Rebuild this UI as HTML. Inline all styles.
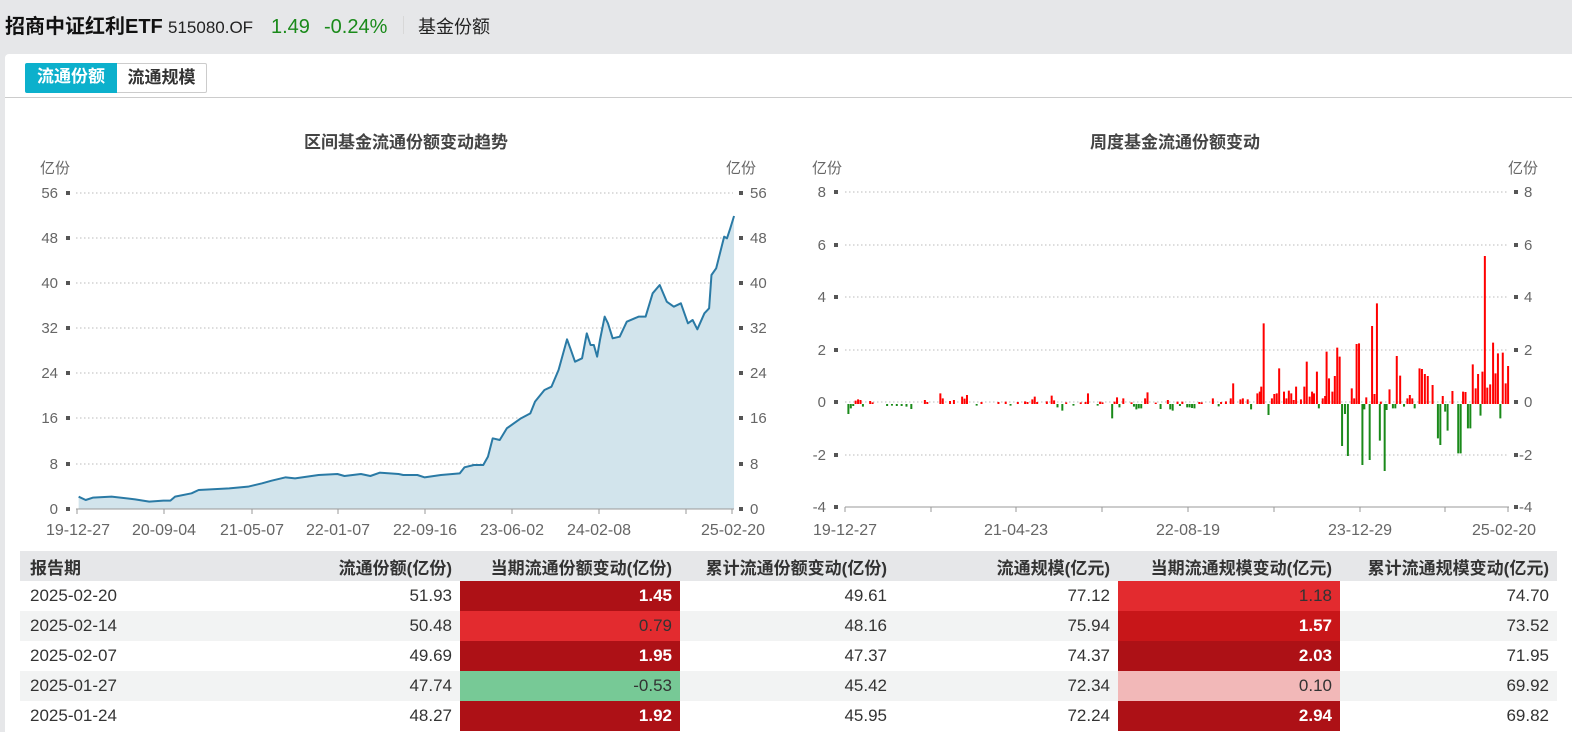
<!DOCTYPE html>
<html><head><meta charset="utf-8">
<style>
*{margin:0;padding:0;box-sizing:border-box}
body{width:1572px;height:732px;overflow:hidden;background:#e6e7e9;font-family:"Liberation Sans","Noto Sans CJK SC",sans-serif;color:#333;position:relative}
.top{position:absolute;left:5px;top:10px;height:30px;display:flex;align-items:baseline;white-space:nowrap}
.top span{display:inline-block}
.panel{position:absolute;left:5px;top:54px;width:1567px;height:678px;background:#fff;border-radius:4px 0 0 0}
.tab{position:absolute;top:63px;height:30px;line-height:28px;font-size:17px;font-weight:bold;text-align:center}
.sep{position:absolute;left:5px;top:97px;width:1567px;height:1px;background:#ccc}
svg{position:absolute;left:0;top:0}
table{position:absolute;left:20px;top:551px;border-collapse:collapse;font-size:17px;width:1537px}
td,th{height:30px;padding:0 8px;text-align:right;white-space:nowrap}
th{background:#e6e7e9;font-weight:bold;color:#333}
td:first-child,th:first-child{text-align:left;padding-left:10px}
tr.a td{background:#f2f3f3}
.dr{background:#ad1116!important;color:#fff;font-weight:bold}
.r{background:#e32b2f!important;color:#333}
.mr{background:#c81619!important;color:#fff;font-weight:bold}
.pk{background:#f2b8b8!important}
.g{background:#77c996!important}
</style></head><body>
<div class="top">
<span style="width:163px;font-size:20px;font-weight:bold;color:#111">招商中证红利ETF</span>
<span style="width:103px;font-size:17px;color:#222">515080.OF</span>
<span style="width:53px;font-size:20px;color:#1a8a1a">1.49</span>
<span style="width:79px;font-size:20px;color:#1a8a1a">-0.24%</span>
<span style="width:1px;height:18px;background:#d8d8d8;align-self:center"></span>
<span style="font-size:18px;color:#222;margin-left:14px">基金份额</span>
</div>
<div class="panel"></div>
<div class="tab" style="left:25px;width:92px;background:#0cb0cc;color:#fff;border-radius:2px 0 0 2px">流通份额</div>
<div class="tab" style="left:117px;width:90px;background:#fff;border:1px solid #ccc;border-left:none;color:#333;border-radius:0 2px 2px 0">流通规模</div>
<div class="sep"></div>

<svg width="1572" height="732" font-family="Liberation Sans, Noto Sans CJK SC, sans-serif">
<text x="406" y="148" font-size="17" font-weight="bold" fill="#444" text-anchor="middle">区间基金流通份额变动趋势</text>
<text x="1175" y="148" font-size="17" font-weight="bold" fill="#444" text-anchor="middle">周度基金流通份额变动</text>
<g font-size="15" fill="#666">
<text x="40" y="173">亿份</text><text x="726" y="173">亿份</text>
<text x="812" y="173">亿份</text><text x="1508" y="173">亿份</text>
</g>
<g stroke="#bbb" stroke-dasharray="1.5,2.5" stroke-width="1">
<line x1="76" x2="733" y1="193" y2="193"/><line x1="76" x2="733" y1="238" y2="238"/>
<line x1="76" x2="733" y1="283" y2="283"/><line x1="76" x2="733" y1="328" y2="328"/>
<line x1="76" x2="733" y1="373" y2="373"/><line x1="76" x2="733" y1="418" y2="418"/>
<line x1="76" x2="733" y1="464" y2="464"/>
</g>
<g font-size="15" fill="#666">
<text x="58" y="198" text-anchor="end">56</text><text x="58" y="243" text-anchor="end">48</text>
<text x="58" y="288" text-anchor="end">40</text><text x="58" y="333" text-anchor="end">32</text>
<text x="58" y="378" text-anchor="end">24</text><text x="58" y="423" text-anchor="end">16</text>
<text x="58" y="469" text-anchor="end">8</text><text x="58" y="514" text-anchor="end">0</text>
<text x="750" y="198">56</text><text x="750" y="243">48</text><text x="750" y="288">40</text>
<text x="750" y="333">32</text><text x="750" y="378">24</text><text x="750" y="423">16</text>
<text x="750" y="469">8</text><text x="750" y="514">0</text>
</g>
<g fill="#555">
<rect x="66" y="191" width="4" height="4"/><rect x="66" y="236" width="4" height="4"/><rect x="66" y="281" width="4" height="4"/><rect x="66" y="326" width="4" height="4"/><rect x="66" y="371" width="4" height="4"/><rect x="66" y="416" width="4" height="4"/><rect x="66" y="462" width="4" height="4"/><rect x="66" y="507" width="4" height="4"/>
<rect x="739" y="191" width="4" height="4"/><rect x="739" y="236" width="4" height="4"/><rect x="739" y="281" width="4" height="4"/><rect x="739" y="326" width="4" height="4"/><rect x="739" y="371" width="4" height="4"/><rect x="739" y="416" width="4" height="4"/><rect x="739" y="462" width="4" height="4"/><rect x="739" y="507" width="4" height="4"/>
</g>
<g transform="translate(41,180) scale(0.4705,0.33333)">
<path d="M80,950 L95,960 110,953 150,950 200,958 230,965 260,962 275,962 285,950 320,940 335,930 400,925 440,920 470,910 490,902 520,892 540,895 590,885 630,882 645,888 680,882 700,888 720,878 760,882 770,885 800,885 815,892 850,885 890,880 900,862 920,855 940,855 950,830 960,775 975,780 990,745 1020,715 1040,700 1050,665 1070,630 1085,620 1100,570 1118,478 1125,505 1135,545 1150,535 1160,460 1168,495 1175,495 1182,530 1188,480 1198,410 1205,430 1215,475 1230,470 1245,425 1270,410 1285,410 1300,340 1315,315 1330,365 1345,380 1360,370 1375,430 1385,420 1395,448 1410,400 1420,385 1425,285 1435,265 1452,170 1458,175 1465,145 1473,108 L1473,988 L80,988 Z" fill="#d2e4ec"/>
<path d="M80,950 L95,960 110,953 150,950 200,958 230,965 260,962 275,962 285,950 320,940 335,930 400,925 440,920 470,910 490,902 520,892 540,895 590,885 630,882 645,888 680,882 700,888 720,878 760,882 770,885 800,885 815,892 850,885 890,880 900,862 920,855 940,855 950,830 960,775 975,780 990,745 1020,715 1040,700 1050,665 1070,630 1085,620 1100,570 1118,478 1125,505 1135,545 1150,535 1160,460 1168,495 1175,495 1182,530 1188,480 1198,410 1205,430 1215,475 1230,470 1245,425 1270,410 1285,410 1300,340 1315,315 1330,365 1345,380 1360,370 1375,430 1385,420 1395,448 1410,400 1420,385 1425,285 1435,265 1452,170 1458,175 1465,145 1473,108" fill="none" stroke="#2a7aa5" stroke-width="2" vector-effect="non-scaling-stroke" stroke-linejoin="round"/>
</g>
<line x1="76" x2="734" y1="509" y2="509" stroke="#999"/>
<g stroke="#999">
<line x1="77" x2="77" y1="509" y2="514"/><line x1="164" x2="164" y1="509" y2="514"/><line x1="252" x2="252" y1="509" y2="514"/><line x1="338" x2="338" y1="509" y2="514"/><line x1="425" x2="425" y1="509" y2="514"/><line x1="512" x2="512" y1="509" y2="514"/><line x1="599" x2="599" y1="509" y2="514"/><line x1="686" x2="686" y1="509" y2="514"/><line x1="732" x2="732" y1="509" y2="514"/>
</g>
<g font-size="16" fill="#666" text-anchor="middle">
<text x="78" y="535">19-12-27</text><text x="164" y="535">20-09-04</text><text x="252" y="535">21-05-07</text><text x="338" y="535">22-01-07</text><text x="425" y="535">22-09-16</text><text x="512" y="535">23-06-02</text><text x="599" y="535">24-02-08</text><text x="733" y="535">25-02-20</text>
</g>

<g stroke="#bbb" stroke-dasharray="1.5,2.5">
<line x1="845" x2="1508" y1="192" y2="192"/><line x1="845" x2="1508" y1="245" y2="245"/>
<line x1="845" x2="1508" y1="297" y2="297"/><line x1="845" x2="1508" y1="350" y2="350"/>
<line x1="845" x2="1508" y1="402" y2="402"/><line x1="845" x2="1508" y1="455" y2="455"/>
</g>
<g font-size="15" fill="#666">
<text x="826" y="197" text-anchor="end">8</text><text x="826" y="250" text-anchor="end">6</text><text x="826" y="302" text-anchor="end">4</text><text x="826" y="355" text-anchor="end">2</text><text x="826" y="407" text-anchor="end">0</text><text x="826" y="460" text-anchor="end">-2</text><text x="826" y="512" text-anchor="end">-4</text>
<text x="1524" y="197">8</text><text x="1524" y="250">6</text><text x="1524" y="302">4</text><text x="1524" y="355">2</text><text x="1524" y="407">0</text><text x="1519" y="460">-2</text><text x="1519" y="512">-4</text>
</g>
<g fill="#555">
<rect x="834" y="190" width="4" height="4"/><rect x="834" y="243" width="4" height="4"/><rect x="834" y="295" width="4" height="4"/><rect x="834" y="348" width="4" height="4"/><rect x="834" y="400" width="4" height="4"/><rect x="834" y="453" width="4" height="4"/><rect x="834" y="505" width="4" height="4"/>
<rect x="1514" y="190" width="4" height="4"/><rect x="1514" y="243" width="4" height="4"/><rect x="1514" y="295" width="4" height="4"/><rect x="1514" y="348" width="4" height="4"/><rect x="1514" y="400" width="4" height="4"/><rect x="1514" y="453" width="4" height="4"/><rect x="1514" y="505" width="4" height="4"/>
</g>
<g transform="translate(800,240) scale(0.484,0.33333)" stroke-width="2" fill="none">
<path vector-effect="non-scaling-stroke" stroke="#f00" d="M958 492V250M895 492V430M990 492V385M1047 492V365M1068 492V395M1088 492V335M1093 492V415M1100 492V455M1105 492V408M1110 492V323M1115 492V350M1150 492V312M1155 492V310M1140 492V445M1182 492V258M1192 492V190M1187 492V462M1218 492V448M1233 492V348M1240 492V407M1280 492V385M1285 492V387M1291 492V402M1297 492V408M1307 492V435M1328 492V468M1348 492V453M1370 492V455M1375 492V456M1390 492V373M1396 492V445M1401 492V402M1410 492V395M1415 492V48M1420 492V443M1426 492V433M1432 492V308M1437 492V400M1442 492V340M1452 492V338M1458 492V430M1463 492V378M945 492V460M950 492V455M953 492V440M975 492V475M980 492V462M985 492V460M1000 492V455M1005 492V475M1010 492V452M1015 492V460M1025 492V440M1042 492V440M1058 492V455M1062 492V460M1080 492V475M1085 492V468M1255 492V475M1260 492V465M1265 492V475M1145 492V475M1170 492V472M1200 492V485M290 492V460M295 492V475M258 492V480M263 492V486M335 492V470M340 492V476M345 492V465M520 492V467M485 492V470M480 492V478M595 492V460M655 492V472M668 492V475M718 492V457M713 492V475M760 492V480M853 492V475M890 492V475M910 492V478M915 492V475M925 492V478M120 492V478M115 492V482M125 492V480M145 492V483M150 492V487M310 492V483M318 492V480M375 492V486M410 492V486M425 492V485M450 492V486M465 492V484M470 492V486M490 492V486M510 492V484M525 492V481M550 492V487M580 492V487M590 492V486M620 492V485M625 492V487M650 492V485M685 492V487M735 492V488M780 492V485M790 492V485M825 492V486M830 492V487M870 492V486M880 492V484M1020 492V480M1035 492V478M1053 492V470"/>
<path vector-effect="non-scaling-stroke" stroke="#1a8a1a" d="M100 492V522M105 492V505M645 492V535M542 492V512M532 492V502M660 492V502M695 492V508M700 492V505M705 492V505M745 492V507M765 492V508M770 492V512M932 492V508M968 492V525M1072 492V505M1120 492V618M1126 492V522M1132 492V648M1162 492V675M1166 492V508M1177 492V660M1198 492V602M1208 492V693M1212 492V510M1225 492V505M1230 492V505M1248 492V500M1270 492V505M1318 492V595M1323 492V615M1333 492V515M1338 492V572M1360 492V640M1365 492V640M1380 492V565M1385 492V565M1406 492V527M1447 492V535M230 492V507M220 492V500M130 492V500M180 492V498M200 492V498M815 492V505M800 492V502M805 492V502M110 492V498M190 492V497M210 492V498M365 492V497M435 492V497M565 492V497M615 492V497M690 492V500M785 492V498M810 492V504M865 492V499"/>
</g>
<line x1="845" x2="1509" y1="507" y2="507" stroke="#999"/>
<g stroke="#999">
<line x1="845" x2="845" y1="507" y2="512"/><line x1="931" x2="931" y1="507" y2="512"/><line x1="1016" x2="1016" y1="507" y2="512"/><line x1="1102" x2="1102" y1="507" y2="512"/><line x1="1188" x2="1188" y1="507" y2="512"/><line x1="1274" x2="1274" y1="507" y2="512"/><line x1="1360" x2="1360" y1="507" y2="512"/><line x1="1445" x2="1445" y1="507" y2="512"/><line x1="1508" x2="1508" y1="507" y2="512"/>
</g>
<g font-size="16" fill="#666" text-anchor="middle">
<text x="845" y="535">19-12-27</text><text x="1016" y="535">21-04-23</text><text x="1188" y="535">22-08-19</text><text x="1360" y="535">23-12-29</text><text x="1504" y="535">25-02-20</text>
</g>
</svg>

<table>
<colgroup><col style="width:210px"><col style="width:230px"><col style="width:220px"><col style="width:215px"><col style="width:223px"><col style="width:222px"><col style="width:217px"></colgroup>
<tr><th>报告期</th><th>流通份额(亿份)</th><th>当期流通份额变动(亿份)</th><th>累计流通份额变动(亿份)</th><th>流通规模(亿元)</th><th>当期流通规模变动(亿元)</th><th>累计流通规模变动(亿元)</th></tr>
<tr><td>2025-02-20</td><td>51.93</td><td class="dr">1.45</td><td>49.61</td><td>77.12</td><td class="r">1.18</td><td>74.70</td></tr>
<tr class="a"><td>2025-02-14</td><td>50.48</td><td class="r">0.79</td><td>48.16</td><td>75.94</td><td class="mr">1.57</td><td>73.52</td></tr>
<tr><td>2025-02-07</td><td>49.69</td><td class="dr">1.95</td><td>47.37</td><td>74.37</td><td class="dr">2.03</td><td>71.95</td></tr>
<tr class="a"><td>2025-01-27</td><td>47.74</td><td class="g">-0.53</td><td>45.42</td><td>72.34</td><td class="pk">0.10</td><td>69.92</td></tr>
<tr><td>2025-01-24</td><td>48.27</td><td class="dr">1.92</td><td>45.95</td><td>72.24</td><td class="dr">2.94</td><td>69.82</td></tr>
</table>
</body></html>
